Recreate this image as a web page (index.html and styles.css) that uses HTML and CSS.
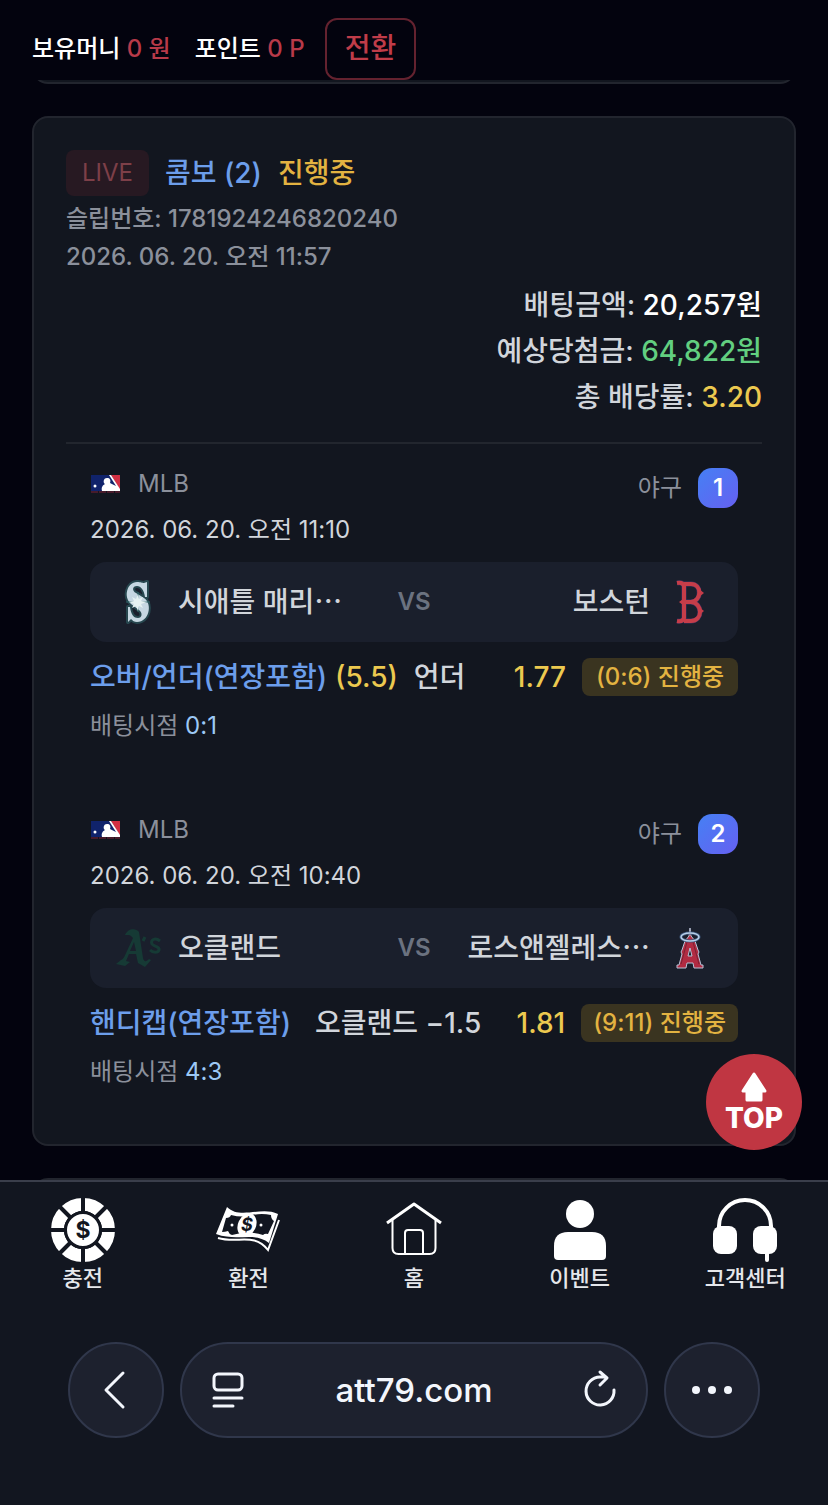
FILE: index.html
```html
<!DOCTYPE html>
<html lang="ko">

<head>
    <meta charset="UTF-8">
    <meta name="viewport" content="width=device-width, initial-scale=1.0">
    <title>배팅내역</title>
    <link rel="stylesheet" href="styles.css">
</head>

<body>
    <header class="wallet">
        <span>보유머니 <b>0 원</b></span>
        <span>포인트 <b>0 P</b></span>
        <button type="button" class="convert">전환</button>
    </header>

    <main class="slips">
        <div class="slip slip-prev"></div>

        <article class="slip">
            <div class="slip-head">
                <div class="slip-title">
                    <span class="live">LIVE</span>
                    <span class="combo">콤보 (2)</span>
                    <span class="state">진행중</span>
                </div>
                <div class="slip-meta">
                    <p>슬립번호: 1781924246820240</p>
                    <p>2026. 06. 20. 오전 11:57</p>
                </div>
                <div class="slip-total">
                    <p>배팅금액: <b class="white">20,257원</b></p>
                    <p>예상당첨금: <b class="green">64,822원</b></p>
                    <p>총 배당률: <b class="yellow">3.20</b></p>
                </div>
            </div>

            <section class="bet">
                <div class="bet-top">
                    <span class="league">
                        <svg class="flag" viewBox="0 0 32 20"><path fill="#10236b" d="M1 1h20l9 16H1z"/><path fill="#d22f43" d="M21 1h9v15z"/><path fill="#fff" d="M19 1h2l9 14v2H12c-1-4 1-6 3-7-2-1-2-6 2-6 3 0 4 2 3 5l6 3z"/><circle cx="5" cy="12" r="1.500" fill="#fff"/><path stroke="#7d2038" stroke-width="1" stroke-dasharray="7 1" d="M1 18h29"/></svg>
                        MLB
                    </span>
                    <span class="sport">야구 <i class="num">1</i></span>
                </div>
                <p class="bet-date">2026. 06. 20. 오전 11:10</p>
                <div class="match">
                    <span class="team">
                        <svg class="logo" viewBox="0 0 48 48"><path fill="#c6d7e2" stroke="#27474f" stroke-width="4" paint-order="stroke" stroke-linejoin="round" d="M30 5l3-1v15h-2c-1-7-4-11-8-11-5 0-5 5-1 7l8 5c9 6 5 24-7 24-3 0-4-1-6-3l-3 3V29h2c1 8 4 11 8 11s5-5 1-8l-8-6C9 19 13 4 23 4c4 0 5 1 7 1z"/><path stroke="#2e6569" stroke-width="1" d="M12 24h24M24 14v20"/><path fill="#e6f2f2" d="m24 16 1 5 4-2-2 4 6 1-6 2 2 4-4-2-1 5-2-5-4 2 2-4-5-2 5-1-2-4 4 2z"/></svg>
                        <span>시애틀 매리⋯</span>
                    </span>
                    <span class="vs">VS</span>
                    <span class="team away">
                        <span>보스턴</span>
                        <svg class="logo" viewBox="0 0 48 48" fill="none"><g stroke="#40315f" stroke-width="5"><path d="M11 5q6-1 7 3v32q-1 4-7 3M18 6h7c11 0 11 17 0 18h-7M25 24c12 1 12 19 0 19h-7"/></g><g stroke="#c63d49" stroke-width="4"><path d="M11 5q6-1 7 3v32q-1 4-7 3M18 6h7c11 0 11 17 0 18h-7M25 24c12 1 12 19 0 19h-7"/></g><path fill="#c63d49" d="m33 11 5 4-5 4zM33 29l5 4-5 4zM13 24l4-3v6z"/></svg>
                    </span>
                </div>
                <div class="pick">
                    <span class="market">오버/언더(연장포함)</span>
                    <span class="line">(5.5)</span>
                    <span class="choice">언더</span>
                    <span class="odds">1.77</span>
                    <span class="result">(0:6) 진행중</span>
                </div>
                <p class="bet-score">배팅시점 <b>0:1</b></p>
            </section>

            <section class="bet">
                <div class="bet-top">
                    <span class="league">
                        <svg class="flag" viewBox="0 0 32 20"><path fill="#10236b" d="M1 1h20l9 16H1z"/><path fill="#d22f43" d="M21 1h9v15z"/><path fill="#fff" d="M19 1h2l9 14v2H12c-1-4 1-6 3-7-2-1-2-6 2-6 3 0 4 2 3 5l6 3z"/><circle cx="5" cy="12" r="1.500" fill="#fff"/><path stroke="#7d2038" stroke-width="1" stroke-dasharray="7 1" d="M1 18h29"/></svg>
                        MLB
                    </span>
                    <span class="sport">야구 <i class="num">2</i></span>
                </div>
                <p class="bet-date">2026. 06. 20. 오전 10:40</p>
                <div class="match">
                    <span class="team">
                        <svg class="logo" viewBox="0 0 48 48"><path fill="#163a35" fill-rule="evenodd" d="M11 11c3-7 11-7 14-3l4 26c1 4 3 4 6 1l2 1-6 7-7-4-2-9-7 0-3 7 4 1-5 4-9-2 5-4c3-1 4-5 6-9l6-13c-3-4-5-3-8-3zM20 18l-4 9h6z"/><path fill="none" stroke="#163a35" stroke-width="3" d="M46 17c-5-4-10-1-8 3 2 3 8 2 7 6-1 3-6 3-9 0M31 13l-2 4"/></svg>
                        <span>오클랜드</span>
                    </span>
                    <span class="vs">VS</span>
                    <span class="team away">
                        <span>로스앤젤레스⋯</span>
                        <svg class="logo" viewBox="0 0 48 48"><path fill="#b12b42" stroke="#b9c4d8" stroke-width="1" fill-rule="evenodd" d="m24 4 1 8 4 5 3 9 1 2-1 2 3 11h2v3h-9l-1-5h-6l-1 5h-9v-3h2l3-11-1-2 1-2 3-9 4-5zM24 24l-2 8h4z"/><path fill="none" stroke="#7d2033" stroke-width="1" d="m21 18-6 22M27 18l6 22"/><ellipse cx="24" cy="13" rx="9" ry="4" fill="none" stroke="#3d587e" stroke-width="3"/><ellipse cx="24" cy="13" rx="9" ry="4" fill="none" stroke="#b9d0e8" stroke-width="1.500"/></svg>
                    </span>
                </div>
                <div class="pick">
                    <span class="market">핸디캡(연장포함)</span>
                    <span class="line"></span>
                    <span class="choice">오클랜드 −1.5</span>
                    <span class="odds">1.81</span>
                    <span class="result">(9:11) 진행중</span>
                </div>
                <p class="bet-score">배팅시점 <b>4:3</b></p>
            </section>
        </article>

        <div class="slip slip-next"></div>
    </main>

    <button type="button" class="to-top">
        <svg viewBox="0 0 28 32"><path fill="#fff" stroke="#fff" stroke-width="3" stroke-linejoin="round" d="M14 3 3 20h4v9h14v-9h4z"/></svg>
        <span>TOP</span>
    </button>

    <nav class="tabs">
        <a href="#charge">
            <svg viewBox="0 0 64 64" fill="none"><circle cx="32" cy="32" r="25.500" stroke="#fff" stroke-width="13"/><path stroke="#121620" stroke-width="4" d="M32 0v64M0 32h64M9 9l46 46M55 9 9 55"/><circle cx="32" cy="32" r="17.500" fill="#fff" stroke="#121620" stroke-width="3"/><text x="32" y="40" class="dollar">$</text></svg>
            충전
        </a>
        <a href="#exchange">
            <svg viewBox="0 0 64 64" fill="none"><path fill="#fff" d="M11 9c13 13 34-1 51 7L53 45C38 33 22 44 0 36z"/><path fill="#121620" d="M15 17q12 3 21 0 10-2 19 0 0 4 3 6l-6 13q-3-1-5 1-15-5-31 0-3-1-4-4-3 1-6 1l4-14q4 0 5-3"/><ellipse cx="31" cy="27" rx="9" ry="12" fill="#fff" transform="rotate(25 31 27)"/><circle cx="16" cy="27" r="1.500" fill="#fff"/><circle cx="45" cy="27" r="1.500" fill="#fff"/><path stroke="#fff" stroke-width="2" d="M2 40c20 6 36-6 50 12l11-30"/><text x="31" y="33" class="dollar small">$</text></svg>
            환전
        </a>
        <a href="#home">
            <svg viewBox="0 0 64 64" fill="none" stroke="#fff" stroke-width="2"><path d="M10.500 22v28q0 6 6 6h31q6 0 6-6V22M23 56V35q0-3 3-3h12q3 0 3 3v21"/><path stroke-width="3" stroke-linejoin="round" d="M5 25 32 6l27 19"/></svg>
            홈
        </a>
        <a href="#event">
            <svg viewBox="0 0 64 64" fill="#fff"><circle cx="32" cy="16" r="14"/><path d="M6 48q0-14 14-14h24q14 0 14 14v10q0 4-4 4H10q-4 0-4-4z"/></svg>
            이벤트
        </a>
        <a href="#support">
            <svg viewBox="0 0 64 64" fill="#fff"><path fill="none" stroke="#fff" stroke-width="4" stroke-linecap="round" d="M6 32v-4a26 26 0 0 1 52 0v4M54 54v8"/><rect y="28" width="24" height="28" rx="8"/><rect x="40" y="28" width="24" height="28" rx="8"/></svg>
            고객센터
        </a>
    </nav>

    <footer class="browser">
        <button type="button" class="round" aria-label="뒤로">
            <svg viewBox="0 0 40 40"><path d="M27 3 10 20l17 17"/></svg>
        </button>
        <div class="address">
            <button type="button" aria-label="페이지 메뉴">
                <svg viewBox="0 0 40 40"><rect x="6" y="4" width="28" height="16" rx="4"/><path d="M6 28h28M6 36h19"/></svg>
            </button>
            <input type="text" value="att79.com" aria-label="주소">
            <button type="button" aria-label="새로고침">
                <svg viewBox="0 0 40 40"><path d="M34 20a14 14 0 1 1-14-13h6M20 2l7 6-7 7"/></svg>
            </button>
        </div>
        <button type="button" class="round" aria-label="더보기">
            <svg viewBox="0 0 40 40" class="dots"><circle cx="4" cy="20" r="4"/><circle cx="20" cy="20" r="4"/><circle cx="36" cy="20" r="4"/></svg>
        </button>
    </footer>
</body>

</html>
```

FILE: styles.css
```css
* {
    box-sizing: border-box;
}

body {
    display: flex;
    flex-direction: column;
    height: 100vh;
    margin: 0;
    background-color: #03030e;
    color: #d1d5db;
    font-family: Inter, "Noto Sans CJK KR", sans-serif;
    font-size: 24px;
    line-height: 32px;
}

p {
    margin: 0;
}

b {
    font-weight: inherit;
}

button,
input {
    font-family: inherit;
}

button {
    padding: 0;
    border: none;
    background: none;
    cursor: pointer;
}

svg {
    flex: none;
    display: block;
    overflow: visible;
}

/* top bar */
.wallet {
    position: relative;
    z-index: 1;
    flex: none;
    display: flex;
    align-items: center;
    gap: 24px;
    padding: 18px 32px 0;
    background-color: #03030e;
    color: #fff;
    font-weight: 500;
}

.wallet b {
    color: #b83a49;
}

.convert {
    height: 62px;
    margin-left: -4px;
    padding: 0 18px 2px;
    border: 2px solid #64222f;
    border-radius: 12px;
    color: #c03c49;
    font-size: 28px;
    font-weight: 500;
    line-height: 40px;
}

/* bet slips */
.slips {
    flex: 1;
    min-height: 0;
    display: flex;
    flex-direction: column;
    gap: 32px;
    padding: 0 32px;
    overflow-y: auto;
    scrollbar-width: none;
}

.slip {
    flex: none;
    display: flex;
    flex-direction: column;
    padding: 32px;
    border: 2px solid #22252e;
    border-radius: 16px;
    background-color: #12161f;
}

.slip-prev {
    margin-top: -64px;
}

.slip-head {
    padding-bottom: 22px;
    border-bottom: 2px solid #22262e;
}

.slip-title {
    display: flex;
    align-items: center;
    gap: 16px;
    font-size: 28px;
    font-weight: 500;
}

.live {
    padding: 0 16px;
    border-radius: 8px;
    background-color: #271922;
    color: #7d3f48;
    font-size: 24px;
    font-weight: 400;
    line-height: 46px;
}

.combo,
.market {
    color: #6c9eeb;
}

.state {
    color: #e3b341;
}

.slip-meta {
    margin-top: 4px;
    color: #8b909b;
    font-weight: 500;
    line-height: 38px;
}

.slip-total {
    margin-top: 6px;
    font-size: 28px;
    font-weight: 500;
    line-height: 46px;
    text-align: right;
}

.white {
    color: #fff;
}

.green {
    color: #62cf80;
}

.yellow,
.line,
.odds {
    color: #ecc94f;
}

.bet {
    padding: 24px;
}

.bet + .bet {
    margin-top: 24px;
}

.bet-top {
    display: flex;
    justify-content: space-between;
    color: #8b909b;
}

.league {
    display: flex;
    gap: 16px;
}

.flag {
    width: 32px;
    height: 20px;
    margin-top: 6px;
}

.sport {
    display: flex;
    align-items: center;
    gap: 16px;
}

.num {
    width: 40px;
    border-radius: 14px;
    background: linear-gradient(135deg, #4580f4, #6660f1);
    color: #fff;
    font-style: normal;
    font-weight: 600;
    line-height: 40px;
    text-align: center;
}

.bet-date {
    line-height: 44px;
}

.match {
    display: grid;
    grid-template-columns: 1fr auto 1fr;
    align-items: center;
    height: 80px;
    margin-top: 10px;
    padding: 0 24px;
    border-radius: 16px;
    background-color: #1a1f2c;
    font-size: 28px;
    font-weight: 500;
}

.team {
    display: flex;
    align-items: center;
    gap: 16px;
    white-space: nowrap;
}

.away {
    justify-content: flex-end;
}

.logo {
    width: 48px;
    height: 48px;
}

.vs {
    color: #6b7280;
    font-size: 24px;
    font-weight: 600;
}

.pick {
    display: flex;
    align-items: center;
    gap: 8px;
    margin-top: 16px;
    font-size: 28px;
    font-weight: 500;
    line-height: 38px;
    white-space: nowrap;
}

.choice {
    margin-left: 8px;
}

.odds {
    margin-left: auto;
}

.result {
    min-width: 156px;
    margin-left: 8px;
    padding: 0 12px;
    border-radius: 8px;
    background-color: #3a3420;
    color: #e3b341;
    font-size: 24px;
    text-align: center;
}

.bet-score {
    margin-top: 14px;
    color: #8b909b;
}

.bet-score b {
    color: #9cc8f5;
}

/* floating button */
.to-top {
    position: fixed;
    right: 26px;
    bottom: 355px;
    z-index: 2;
    display: flex;
    flex-direction: column;
    align-items: center;
    justify-content: center;
    width: 96px;
    height: 96px;
    border-radius: 50%;
    background-color: #c03642;
    color: #fff;
    font-size: 28px;
    font-weight: 800;
    line-height: 30px;
}

.to-top svg {
    width: 28px;
    height: 32px;
}

/* bottom menu */
.tabs {
    flex: none;
    display: grid;
    grid-template-columns: repeat(5, 1fr);
    padding: 16px 0 40px;
    border-top: 2px solid #3a3e4b;
    background-color: #121620;
}

.tabs a {
    display: flex;
    flex-direction: column;
    align-items: center;
    color: #e5e7eb;
    font-size: 22px;
    font-weight: 500;
    text-decoration: none;
}

.tabs svg {
    width: 64px;
    height: 64px;
}

.dollar {
    fill: #121620;
    font-size: 23px;
    font-weight: 700;
    text-anchor: middle;
}

.small {
    font-size: 18px;
    font-style: italic;
}

/* browser bar */
.browser {
    flex: none;
    display: flex;
    gap: 16px;
    padding: 8px 68px 67px;
    background-color: #121620;
}

.round,
.address {
    display: flex;
    align-items: center;
    justify-content: center;
    height: 96px;
    border: 2px solid #30374b;
    border-radius: 48px;
    background-color: #1d212e;
}

.round {
    flex: none;
    width: 96px;
}

.address {
    flex: 1;
    min-width: 0;
    padding: 0 26px;
}

.address input {
    flex: 1;
    min-width: 0;
    border: none;
    outline: none;
    background: none;
    color: #f3f6fc;
    font-size: 33px;
    font-weight: 500;
    text-align: center;
}

.browser svg {
    width: 40px;
    height: 40px;
    fill: none;
    stroke: #f3f6fc;
    stroke-width: 3;
    stroke-linecap: round;
    stroke-linejoin: round;
}

.browser .dots {
    fill: #f3f6fc;
    stroke: none;
}
```
